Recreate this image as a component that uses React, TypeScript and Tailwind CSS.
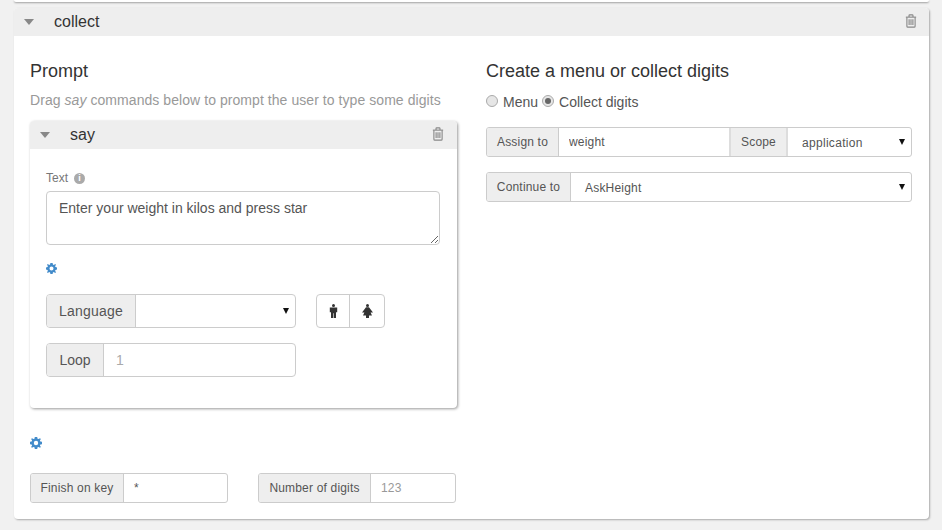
import React from 'react';

const font = 'font-["Liberation_Sans",Arial,sans-serif]';

function Caret() {
    return <span className="w-0 h-0 border-x-[5.5px] border-x-transparent border-t-[6px] border-t-[#888]" />;
}

function Trash() {
    return (
        <svg width="12" height="14" viewBox="0 0 14 16" fill="none" stroke="#888" strokeWidth="1.3">
            <path d="M1 3.5h12" />
            <path d="M4.7 3.2V1.6c0-.5.3-.8.8-.8h3c.5 0 .8.3.8.8v1.6" />
            <path d="M2.2 3.5v10.6c0 .7.4 1.1 1.1 1.1h7.4c.7 0 1.1-.4 1.1-1.1V3.5" />
            <path d="M4.8 6v6.8M7 6v6.8M9.2 6v6.8" />
        </svg>
    );
}

function Gear({ size }: { size: number }) {
    return (
        <svg width={size} height={size} viewBox="0 0 24 24">
            <path
                fill="#428bca"
                fillRule="evenodd"
                d="M9.6 0h4.8l.7 3.3 2 .8L20 2.3 21.7 4l-1.8 2.9.8 2 3.3.7v4.8l-3.3.7-.8 2 1.8 2.9-1.7 1.7-2.9-1.8-2 .8-.7 3.3H9.6l-.7-3.3-2-.8L4 21.7 2.3 20l1.8-2.9-.8-2L0 14.4V9.6l3.3-.7.8-2L2.3 4 4 2.3l2.9 1.8 2-.8zM12 7.6a4.4 4.4 0 1 0 0 8.8 4.4 4.4 0 0 0 0-8.8z"
            />
        </svg>
    );
}

function SelectArrow() {
    return <span className="mb-[1px] w-0 h-0 border-x-[3px] border-x-transparent border-t-[6px] border-t-[#111]" />;
}

function Addon({ label, big, className = '' }: { label: string; big?: boolean; className?: string }) {
    return (
        <span
            className={`flex items-center justify-center shrink-0 bg-[#eeeeee] text-[#555] ${big ? 'text-sm' : 'text-xs tracking-[0.18px]'} ${className}`}
        >
            {label}
        </span>
    );
}

function Radio({ checked }: { checked?: boolean }) {
    return (
        <span className="flex items-center justify-center w-3 h-3 mb-[3px] rounded-full border border-[#aaa] bg-[#e6e6e6]">
            {checked && <span className="w-1.5 h-1.5 rounded-full bg-[#666]" />}
        </span>
    );
}

export default function App() {
    return (
        <div className={`${font} w-[942px] h-[530px] overflow-hidden bg-[#f1f1f1] pl-[14px] pr-[13px]`}>
            <div className="h-[2px] bg-white shadow-[0_1px_2px_rgba(0,0,0,0.35)] rounded-b-sm" />

            <section className="mt-[6px] h-[511px] bg-white rounded-[4px] shadow-[1px_1px_2px_rgba(0,0,0,0.3)]">
                <header className="flex items-center h-[28px] bg-[#eeeeee] pl-[10px] pr-[12px] rounded-t-[4px]">
                    <Caret />
                    <span className="ml-[20px] text-base text-[#333]">collect</span>
                    <span className="ml-auto flex mb-[3px]"><Trash /></span>
                </header>

                <div className="grid grid-cols-[426px_426px] gap-x-[30px] pl-[16px] pt-[24px]">
                    {/* left column */}
                    <div>
                        <h3 className="text-lg leading-[22px] text-[#333]">Prompt</h3>
                        <p className="mt-[8px] text-sm leading-[20px] tracking-[0.06px] text-[#999]">
                            Drag <em>say</em> commands below to prompt the user to type some digits
                        </p>

                        <div className="mt-[11px] w-[427px] h-[287px] rounded-[4px] bg-white shadow-[1px_1px_3px_rgba(0,0,0,0.4)]">
                            <div className="flex items-center h-[28px] bg-[#eeeeee] pl-[10px] pr-[13px] rounded-t-[4px]">
                                <Caret />
                                <span className="ml-[20px] text-base text-[#333]">say</span>
                                <span className="ml-auto flex mb-[3px]"><Trash /></span>
                            </div>

                            <div className="pl-[16px] pt-[22px]">
                                <div className="flex items-center gap-[6px] h-[14px] text-xs text-[#777]">
                                    Text
                                    <span className="flex items-center justify-center w-[11px] h-[11px] rounded-full bg-[#aaa] text-white text-[9px] font-bold">i</span>
                                </div>
                                <textarea
                                    readOnly
                                    value="Enter your weight in kilos and press star"
                                    className="block mt-[6px] w-[394px] h-[54px] rounded-[4px] border border-[#ccc] px-[12px] py-[6px] text-sm leading-[20px] text-[#555] outline-none"
                                />
                                <div className="mt-[18px] flex h-[11px]"><Gear size={11} /></div>

                                <div className="mt-[20px] flex items-center gap-[20px]">
                                    <div className="flex w-[250px] h-[34px] rounded-[4px] border border-[#ccc] overflow-hidden">
                                        <Addon big label="Language" className="w-[89px] border-r border-[#ccc] tracking-[0.2px]" />
                                        <div className="flex flex-1 items-center justify-end pr-[6px]"><SelectArrow /></div>
                                    </div>
                                    <div className="flex w-[69px] h-[34px] rounded-[4px] border border-[#ccc]">
                                        <span className="flex w-[33px] items-center justify-center border-r border-[#ccc]">
                                            <svg width="9" height="14" viewBox="0 0 9 14" fill="#333">
                                                <circle cx="4.5" cy="1.5" r="1.5" />
                                                <path d="M.8 3.6h7.4v4.6H7V14H4.8V9.2h-.6V14H2V8.2H.8z" />
                                            </svg>
                                        </span>
                                        <span className="flex flex-1 items-center justify-center">
                                            <svg width="11" height="14" viewBox="0 0 11 14" fill="#333">
                                                <circle cx="5.5" cy="1.5" r="1.5" />
                                                <path d="M4 3.2h3L11 8.5H8.6l1.4 3H7V14H4v-2.5H1l1.4-3H0z" />
                                            </svg>
                                        </span>
                                    </div>
                                </div>

                                <div className="mt-[15px] flex w-[250px] h-[34px] rounded-[4px] border border-[#ccc] overflow-hidden">
                                    <Addon big label="Loop" className="w-[57px] border-r border-[#ccc]" />
                                    <input readOnly placeholder="1" className="flex-1 min-w-0 px-[12px] text-sm text-[#555] placeholder:text-[#aaa] outline-none" />
                                </div>
                            </div>
                        </div>

                        <div className="mt-[29px] flex h-[12px]"><Gear size={12} /></div>

                        <div className="mt-[24px] flex gap-[30px]">
                            <div className="flex w-[198px] h-[30px] rounded-[3px] border border-[#ccc] overflow-hidden">
                                <Addon label="Finish on key" className="w-[93px] border-r border-[#ccc]" />
                                <input readOnly value="*" className="flex-1 min-w-0 px-[10px] text-xs text-[#555] outline-none" />
                            </div>
                            <div className="flex w-[198px] h-[30px] rounded-[3px] border border-[#ccc] overflow-hidden">
                                <Addon label="Number of digits" className="w-[112px] border-r border-[#ccc]" />
                                <input readOnly placeholder="123" className="flex-1 min-w-0 px-[10px] text-xs tracking-[0.2px] text-[#555] placeholder:text-[#999] outline-none" />
                            </div>
                        </div>
                    </div>

                    {/* right column */}
                    <div>
                        <h3 className="text-lg leading-[22px] text-[#333]">Create a menu or collect digits</h3>
                        <div className="mt-[10px] flex items-center h-[20px] text-sm text-[#555]">
                            <Radio />
                            <span className="ml-[5px]">Menu</span>
                            <span className="ml-[4px]"><Radio checked /></span>
                            <span className="ml-[5px]">Collect digits</span>
                        </div>

                        <div className="mt-[15px] flex h-[30px] rounded-[3px] border border-[#ccc] overflow-hidden">
                            <Addon label="Assign to" className="w-[72px] border-r border-[#ccc]" />
                            <input readOnly value="weight" className="w-[170px] min-w-0 px-[10px] text-xs tracking-[0.2px] text-[#555] outline-none" />
                            <Addon label="Scope" className="w-[59px] border-x-2 border-[#ddd]" />
                            <div className="flex flex-1 items-center justify-between pl-[14px] pr-[6px] text-xs tracking-[0.3px] text-[#555]">
                                <span className="pt-[1px]">application</span>
                                <SelectArrow />
                            </div>
                        </div>

                        <div className="mt-[15px] flex h-[30px] rounded-[3px] border border-[#ccc] overflow-hidden">
                            <Addon label="Continue to" className="w-[84px] border-r border-[#ccc]" />
                            <div className="flex flex-1 items-center justify-between pl-[14px] pr-[6px] text-xs tracking-[0.2px] text-[#555]">
                                <span className="pt-[1px]">AskHeight</span>
                                <SelectArrow />
                            </div>
                        </div>
                    </div>
                </div>
            </section>
        </div>
    );
}
